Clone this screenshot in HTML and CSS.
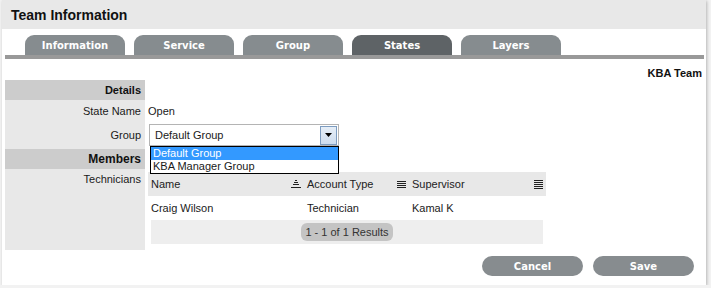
FILE: index.html
```html
<!DOCTYPE html>
<html lang="en">
<head>
  <meta charset="UTF-8" />
  <title>Team Information</title>
  <link rel="stylesheet" href="styles.css">
</head>
<body>
  <div class="panel">
    <div class="title-bar">Team Information</div>

    <div class="tabs">
      <div class="tab">Information</div>
      <div class="tab">Service</div>
      <div class="tab">Group</div>
      <div class="tab active">States</div>
      <div class="tab">Layers</div>
    </div>
    <div class="tab-line"></div>

    <div class="team-name">KBA Team</div>

    <div class="form">
      <div class="label section">Details</div>
      <div class="value"></div>

      <div class="label">State Name</div>
      <div class="value">Open</div>

      <div class="label">Group</div>
      <div class="value">
        <div class="select">
          <span class="select-text">Default Group</span>
          <span class="select-btn">
            <svg width="7" height="4" viewBox="0 0 7 4"><path d="M0 0h7L3.5 4z" fill="#000"/></svg>
          </span>
          <!-- open dropdown list -->
          <div class="select-list">
            <div class="option selected">Default Group</div>
            <div class="option">KBA Manager Group</div>
          </div>
        </div>
      </div>

      <div class="label section members">Members</div>
      <div class="value"></div>

      <div class="label top">Technicians</div>
      <div class="value tech">
        <table class="grid">
          <colgroup>
            <col style="width:156px">
            <col style="width:105px">
            <col style="width:137px">
          </colgroup>
          <thead>
            <tr>
              <th><div class="th-in">Name
                <svg class="sort" width="10" height="9" viewBox="0 0 10 9"><path d="M4 0.5h2M3 2.5h4M2 4.5h6M0 7.5h10" stroke="#222" stroke-width="1"/></svg>
              </div></th>
              <th><div class="th-in">Account Type
                <svg class="sort" width="9" height="9" viewBox="0 0 9 9"><path d="M0 1.5h9M0 3.5h9M0 5.5h9M0 7.5h9" stroke="#222" stroke-width="1"/></svg>
              </div></th>
              <th><div class="th-in">Supervisor
                <svg class="sort" width="9" height="9" viewBox="0 0 9 9"><path d="M0 0.5h9M0 2.5h9M0 4.5h9M0 6.5h9M0 8.5h9" stroke="#222" stroke-width="1"/></svg>
              </div></th>
            </tr>
          </thead>
          <tbody>
            <tr>
              <td>Craig Wilson</td>
              <td>Technician</td>
              <td>Kamal K</td>
            </tr>
            <tr>
              <td colspan="3" class="foot-cell">
                <div class="foot"><span class="pager">1 - 1 of 1 Results</span></div>
              </td>
            </tr>
          </tbody>
        </table>
      </div>
    </div>

    <div class="actions">
      <button class="btn">Cancel</button>
      <button class="btn">Save</button>
    </div>
  </div>
</body>
</html>
```

FILE: styles.css
```css
body {
  margin: 0;
  background: #f2f2f2;
  font-family: "Liberation Sans", Arial, sans-serif;
  font-size: 11px;
  color: #222;
}

.panel {
  width: 704px;
  height: 285px;
  margin-left: 2px;
  background: white;
  box-shadow: 1px 1px 3px rgba(0,0,0,0.25);
}

.title-bar {
  height: 29px;
  line-height: 30px;
  padding-left: 9px;
  background: #e8e8e8;
  font-size: 14px;
  font-weight: bold;
  color: #111;
}

.tabs {
  display: flex;
  gap: 9px;
  margin-top: 6px;
  padding-left: 23px;
}

.tab {
  width: 100px;
  height: 20px;
  line-height: 21px;
  text-align: center;
  background: #868c8f;
  border-radius: 9px 9px 0 0;
  color: white;
  font-family: "DejaVu Sans", Verdana, sans-serif;
  font-weight: bold;
  font-size: 10px;
}

.tab.active {
  background: #5e6366;
}

.tab-line {
  height: 4px;
  margin: 0 2px 0 3px;
  background: #999;
}

.team-name {
  margin-top: 7px;
  height: 14px;
  line-height: 14px;
  padding-right: 4px;
  text-align: right;
  font-weight: bold;
  color: #111;
}

.form {
  display: grid;
  grid-template-columns: 140px 1fr;
  grid-template-rows: 20px 21px 28px 20px auto;
  margin-left: 3px;
}

.label {
  background: #e8e8e8;
  padding-right: 4px;
  display: flex;
  align-items: center;
  justify-content: flex-end;
  font-size: 11px;
  color: #1a1a1a;
}

.label.section {
  background: #cccccc;
  font-weight: bold;
  color: #111;
}

.label.members {
  font-size: 12px;
}

.label.top {
  align-items: flex-start;
  padding-top: 4px;
}

.value {
  display: flex;
  align-items: center;
  padding-left: 3px;
  font-size: 11px;
  color: #1a1a1a;
}

.select {
  position: relative;
  width: 188px;
  height: 20px;
  border: 1px solid #b4b4b4;
  display: flex;
  align-items: center;
  justify-content: space-between;
  margin-left: 1px;
}

.select-text {
  padding-left: 5px;
}

.select-btn {
  width: 15px;
  height: 17px;
  margin-right: 1px;
  border: 1px solid #7d9cc0;
  background: linear-gradient(#e6eef7, #cddcee);
  display: flex;
  align-items: center;
  justify-content: center;
}

.select-list {
  position: absolute;
  top: 21px;
  left: 0;
  width: 187px;
  border: 1px solid #000;
  background: white;
  z-index: 2;
}

.option {
  height: 13px;
  line-height: 13px;
  padding-left: 2px;
  font-size: 11px;
}

.option.selected {
  background: #3399ff;
  color: white;
}

.value.tech {
  display: block;
  padding: 3px 0 6px 3px;
}

.grid {
  border-collapse: collapse;
  table-layout: fixed;
  width: 398px;
}

.grid th {
  height: 24px;
  padding: 0 3px 0 3px;
  background: #e8e8e8;
  font-weight: normal;
  text-align: left;
  color: #222;
}

.th-in {
  display: flex;
  align-items: center;
  justify-content: space-between;
}

.grid td {
  height: 24px;
  padding: 0 3px;
}

.foot {
  height: 24px;
  background: #eeeeee;
  display: flex;
  align-items: center;
  justify-content: center;
}

.pager {
  height: 18px;
  line-height: 18px;
  padding: 0 4px;
  border-radius: 6px;
  background: #c4c4c4;
  color: #333;
}

.actions {
  display: flex;
  justify-content: flex-end;
  gap: 10px;
  margin-top: 6px;
  padding-right: 12px;
}

.btn {
  width: 101px;
  height: 20px;
  border: none;
  border-radius: 10px;
  background: #878c8f;
  color: white;
  font-family: "DejaVu Sans", Verdana, sans-serif;
  font-weight: bold;
  font-size: 10px;
  padding: 0;
}
```
